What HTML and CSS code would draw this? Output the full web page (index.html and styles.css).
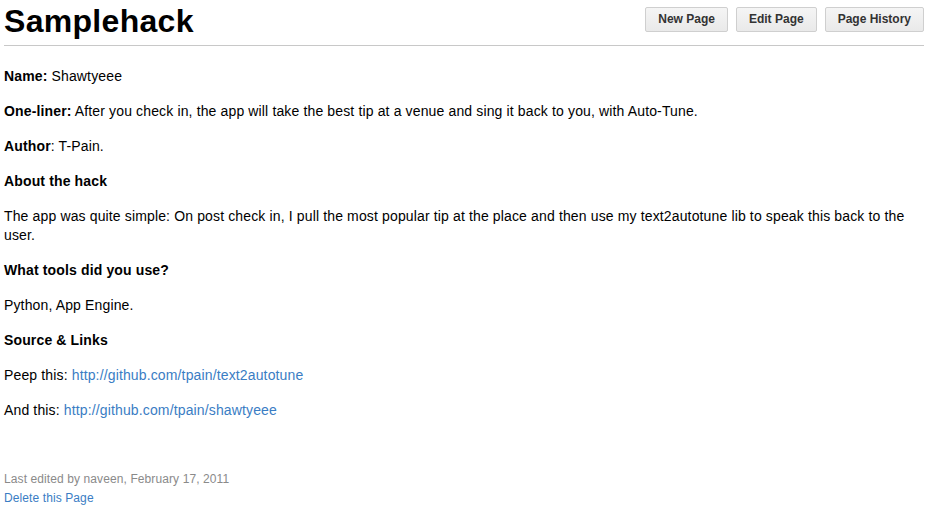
FILE: index.html
```html
<!DOCTYPE html>
<html>
<head>
<meta charset="utf-8">
<link rel="stylesheet" href="styles.css">
</head>
<body>
<div class="page">
  <div class="header">
    <h1 class="title">Samplehack</h1>
    <div class="actions">
      <a class="btn" href="#">New Page</a>
      <a class="btn" href="#">Edit Page</a>
      <a class="btn" href="#">Page History</a>
    </div>
  </div>
  <div class="content">
    <p><b>Name:</b> Shawtyeee</p>
    <p><b>One-liner:</b> After you check in, the app will take the best tip at a venue and sing it back to you, with Auto-Tune.</p>
    <p><b>Author</b>: T-Pain.</p>
    <p><b>About the hack</b></p>
    <p>The app was quite simple: On post check in, I pull the most popular tip at the place and then use my text2autotune lib to speak this back to the user.</p>
    <p><b>What tools did you use?</b></p>
    <p>Python, App Engine.</p>
    <p><b>Source &amp; Links</b></p>
    <p>Peep this: <a href="#">http://github.com/tpain/text2autotune</a></p>
    <p>And this: <a href="#">http://github.com/tpain/shawtyeee</a></p>
  </div>
  <div class="footer">
    <div class="meta">Last edited by naveen, February 17, 2011</div>
    <a href="#">Delete this Page</a>
  </div>
</div>
</body>
</html>
```
FILE: styles.css
```css
html, body {
  margin: 0;
  padding: 0;
  background: #fff;
}
body {
  font-family: "Liberation Sans", Arial, Helvetica, sans-serif;
  font-size: 14px;
  line-height: 19px;
  color: #000;
}
.page {
  padding: 0 6px 0 4px;
}
.header {
  display: flex;
  justify-content: space-between;
  align-items: flex-start;
  height: 45px;
  border-bottom: 1px solid #c8c8c8;
}
.title {
  margin: 0;
  padding-top: 1px;
  font-size: 32px;
  line-height: 40px;
  font-weight: bold;
  letter-spacing: 0.3px;
  color: #000;
}
.actions {
  display: flex;
  gap: 8px;
  margin-top: 7px;
}
.btn {
  display: block;
  height: 23px;
  line-height: 23px;
  padding: 0 12px;
  border: 1px solid #cfcfcf;
  border-radius: 2px;
  background: linear-gradient(#f5f5f5, #e9e9e9);
  color: #333;
  font-size: 12px;
  font-weight: bold;
  text-decoration: none;
}
.content {
  padding-top: 5px;
  letter-spacing: 0.14px;
}
.content p {
  margin: 16px 0;
}
a {
  color: #3a7dc4;
  text-decoration: none;
}
.footer {
  margin-top: 50px;
  font-size: 12px;
  line-height: 19px;
  letter-spacing: 0.1px;
}
.meta {
  color: #8a8a8a;
}
```
